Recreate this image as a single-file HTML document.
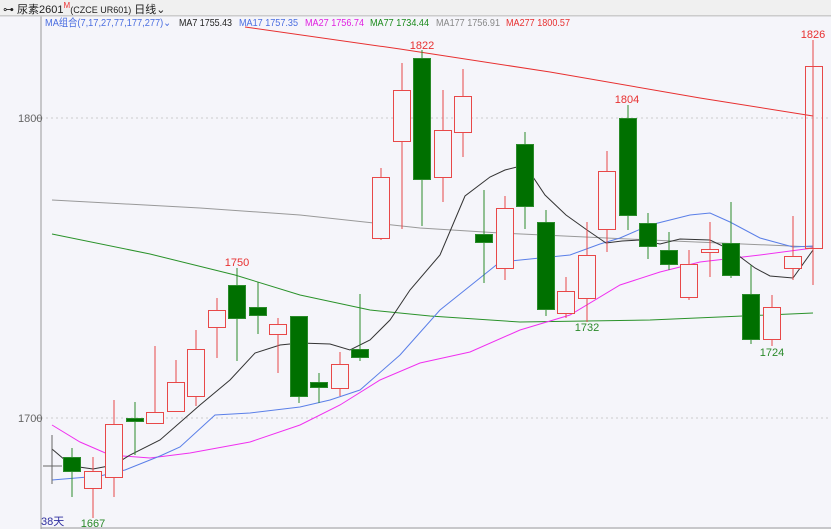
<!DOCTYPE html>
<html><head><meta charset="utf-8"><style>
body{margin:0;width:831px;height:529px;overflow:hidden;background:#f5f5fa;font-family:"Liberation Sans","Noto Sans CJK SC",sans-serif}
.t{position:absolute;font-size:11px;white-space:nowrap}
</style></head><body>
<div style="position:absolute;left:0;top:0;width:831px;height:15px;background:#f0f0f0;border-bottom:1px solid #ccc"></div>
<div class="t" style="left:3px;top:1px;color:#222">⊶ 尿素2601<span style="color:#e33;font-size:8px;vertical-align:top">M</span><span style="font-size:9px">(CZCE UR601)</span> 日线⌄</div>
<svg width="831" height="529" style="position:absolute;left:0;top:0" font-family="Liberation Sans, Noto Sans CJK SC, sans-serif">
<rect x="41" y="16" width="790" height="513" fill="#f5f5fa"/>
<line x1="41" y1="16" x2="41" y2="529" stroke="#999"/>
<line x1="41" y1="528" x2="831" y2="528" stroke="#999"/>
<line x1="0" y1="16" x2="831" y2="16" stroke="#ccc"/>
<line x1="41" y1="118" x2="831" y2="118" stroke="#ccc" stroke-dasharray="2,3"/>
<line x1="41" y1="418" x2="831" y2="418" stroke="#ccc" stroke-dasharray="2,3"/>
<line x1="36" y1="118" x2="41" y2="118" stroke="#999"/><line x1="36" y1="418" x2="41" y2="418" stroke="#999"/>
<text x="18" y="122" font-size="11" fill="#666">1800</text>
<text x="18" y="422" font-size="11" fill="#666">1700</text>
<g font-size="10.5">
<text x="45" y="26" fill="#4a6de0" textLength="126" lengthAdjust="spacingAndGlyphs">MA组合(7,17,27,77,177,277)⌄</text>
<text x="179" y="26" fill="#222" textLength="53" lengthAdjust="spacingAndGlyphs">MA7 1755.43</text>
<text x="239" y="26" fill="#4a6de0" textLength="59" lengthAdjust="spacingAndGlyphs">MA17 1757.35</text>
<text x="305" y="26" fill="#e020e0" textLength="59" lengthAdjust="spacingAndGlyphs">MA27 1756.74</text>
<text x="370" y="26" fill="#1a8a1a" textLength="59" lengthAdjust="spacingAndGlyphs">MA77 1734.44</text>
<text x="436" y="26" fill="#888" textLength="64" lengthAdjust="spacingAndGlyphs">MA177 1756.91</text>
<text x="506" y="26" fill="#e83030" textLength="64" lengthAdjust="spacingAndGlyphs">MA277 1800.57</text>
</g>
<g fill="none" stroke-width="1">
<polyline stroke="#e83030" points="245,27 400,49 550,72 700,98 813,116"/>
<polyline stroke="#999" points="52,200 200,208 300,215 420,228 500,233 650,240 813,247"/>
<polyline stroke="#2a922a" points="52,234 150,254 235,275 300,295 370,310 430,316 520,322 650,320 813,313"/>
<polyline stroke="#f030f0" points="52,425 80,442 110,455 150,458 190,453 250,442 300,425 340,405 380,380 420,363 470,352 520,330 570,315 620,285 660,272 700,262 760,255 813,248"/>
<polyline stroke="#5a7fe8" points="52,480 100,476 125,470 160,456 180,447 215,415 250,413 300,407 330,400 360,390 400,355 440,310 465,290 500,262 540,258 570,255 600,244 620,238 650,225 690,215 710,213 730,222 760,238 793,247 813,246"/>
<polyline stroke="#333" points="52,449 72,466 93,469 114,465 130,455 160,440 200,405 230,380 255,353 280,345 300,343 330,344 350,350 370,340 390,320 410,290 440,255 465,196 490,177 505,170 525,165 545,195 566,215 587,230 606,243 622,241 640,240 660,244 680,239 710,240 731,250 755,268 770,276 793,278 813,250"/>
</g>
<g stroke="#e84848" fill="none">
<line x1="93" y1="457" x2="93" y2="518"/><rect x="84.5" y="471.5" width="17" height="17" fill="#f5f5fa"/>
<line x1="114" y1="400" x2="114" y2="497"/><rect x="105.5" y="424.5" width="17" height="53" fill="#f5f5fa"/>
<line x1="155" y1="346" x2="155" y2="424"/><rect x="146.5" y="412.5" width="17" height="11" fill="#f5f5fa"/>
<line x1="176" y1="360" x2="176" y2="412"/><rect x="167.5" y="382.5" width="17" height="29" fill="#f5f5fa"/>
<line x1="196" y1="330" x2="196" y2="406"/><rect x="187.5" y="349.5" width="17" height="47" fill="#f5f5fa"/>
<line x1="217" y1="298" x2="217" y2="358"/><rect x="208.5" y="310.5" width="17" height="17" fill="#f5f5fa"/>
<line x1="278" y1="318" x2="278" y2="373"/><rect x="269.5" y="324.5" width="17" height="10" fill="#f5f5fa"/>
<line x1="340" y1="352" x2="340" y2="396"/><rect x="331.5" y="364.5" width="17" height="24" fill="#f5f5fa"/>
<line x1="381" y1="168" x2="381" y2="240"/><rect x="372.5" y="177.5" width="17" height="61" fill="#f5f5fa"/>
<line x1="402" y1="63" x2="402" y2="229"/><rect x="393.5" y="90.5" width="17" height="51" fill="#f5f5fa"/>
<line x1="443" y1="90" x2="443" y2="202"/><rect x="434.5" y="130.5" width="17" height="47" fill="#f5f5fa"/>
<line x1="463" y1="69" x2="463" y2="157"/><rect x="454.5" y="96.5" width="17" height="36" fill="#f5f5fa"/>
<line x1="505" y1="196" x2="505" y2="280"/><rect x="496.5" y="208.5" width="17" height="60" fill="#f5f5fa"/>
<line x1="566" y1="277" x2="566" y2="318"/><rect x="557.5" y="291.5" width="17" height="22" fill="#f5f5fa"/>
<line x1="587" y1="222" x2="587" y2="322"/><rect x="578.5" y="255.5" width="17" height="43" fill="#f5f5fa"/>
<line x1="607" y1="151" x2="607" y2="252"/><rect x="598.5" y="171.5" width="17" height="58" fill="#f5f5fa"/>
<line x1="689" y1="250" x2="689" y2="300"/><rect x="680.5" y="264.5" width="17" height="33" fill="#f5f5fa"/>
<line x1="710" y1="222" x2="710" y2="277"/><rect x="701.5" y="249.5" width="17" height="3" fill="#f5f5fa"/>
<line x1="772" y1="295" x2="772" y2="346"/><rect x="763.5" y="307.5" width="17" height="32" fill="#f5f5fa"/>
<line x1="793" y1="216" x2="793" y2="280"/><rect x="784.5" y="256.5" width="17" height="12" fill="#f5f5fa"/>
<line x1="813" y1="40" x2="813" y2="285"/><rect x="805.5" y="66.5" width="17" height="182" fill="none"/>
</g>
<g stroke="#2a8a2a" fill="#007000">
<line x1="52" y1="435" x2="52" y2="484" stroke="#666"/><line x1="43" y1="466" x2="62" y2="466" stroke="#666"/>
<line x1="72" y1="448" x2="72" y2="497"/><rect x="63.5" y="457.5" width="17" height="14"/>
<line x1="135" y1="402" x2="135" y2="455"/><rect x="126.5" y="418.5" width="17" height="3"/>
<line x1="237" y1="268" x2="237" y2="361"/><rect x="228.5" y="285.5" width="17" height="33"/>
<line x1="258" y1="282" x2="258" y2="334"/><rect x="249.5" y="307.5" width="17" height="8"/>
<line x1="299" y1="316" x2="299" y2="403"/><rect x="290.5" y="316.5" width="17" height="80"/>
<line x1="319" y1="373" x2="319" y2="403"/><rect x="310.5" y="382.5" width="17" height="5"/>
<line x1="360" y1="294" x2="360" y2="361"/><rect x="351.5" y="349.5" width="17" height="8"/>
<line x1="422" y1="50" x2="422" y2="226"/><rect x="413.5" y="58.5" width="17" height="121"/>
<line x1="484" y1="190" x2="484" y2="283"/><rect x="475.5" y="234.5" width="17" height="8"/>
<line x1="525" y1="132" x2="525" y2="229"/><rect x="516.5" y="144.5" width="17" height="62"/>
<line x1="546" y1="210" x2="546" y2="316"/><rect x="537.5" y="222.5" width="17" height="87"/>
<line x1="628" y1="105" x2="628" y2="230"/><rect x="619.5" y="118.5" width="17" height="97"/>
<line x1="648" y1="213" x2="648" y2="259"/><rect x="639.5" y="223.5" width="17" height="23"/>
<line x1="669" y1="232" x2="669" y2="270"/><rect x="660.5" y="250.5" width="17" height="14"/>
<line x1="731" y1="202" x2="731" y2="278"/><rect x="722.5" y="243.5" width="17" height="32"/>
<line x1="751" y1="265" x2="751" y2="344"/><rect x="742.5" y="294.5" width="17" height="45"/>
</g>
<g font-size="11" text-anchor="middle">
<text x="422" y="49" fill="#e83030">1822</text>
<text x="627" y="103" fill="#e83030">1804</text>
<text x="813" y="38" fill="#e83030">1826</text>
<text x="237" y="266" fill="#e83030">1750</text>
<text x="587" y="331" fill="#2a8a2a">1732</text>
<text x="772" y="356" fill="#2a8a2a">1724</text>
<text x="93" y="527" fill="#2a8a2a">1667</text>
</g>
<text x="41" y="525" font-size="11" fill="#3030a0">38天</text>
</svg>
</body></html>
